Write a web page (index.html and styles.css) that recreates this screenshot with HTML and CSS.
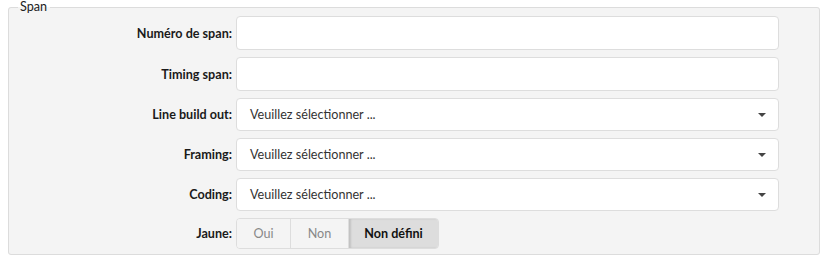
FILE: index.html
```html
<!DOCTYPE html>
<html lang="fr">
<head>
    <meta charset="UTF-8">
    <title>Span</title>
    <link rel="stylesheet" href="styles.css">
</head>
<body>
    <fieldset class="groupe">
        <legend>Span</legend>
        <div class="ligne">
            <label for="numeroSpan">Numéro de span:</label>
            <input type="text" id="numeroSpan" class="champ">
        </div>
        <div class="ligne">
            <label for="timingSpan">Timing span:</label>
            <input type="text" id="timingSpan" class="champ">
        </div>
        <div class="ligne">
            <label for="lineBuildOut">Line build out:</label>
            <div class="choix" id="lineBuildOut">Veuillez sélectionner ...<span class="fleche"></span></div>
        </div>
        <div class="ligne">
            <label for="framing">Framing:</label>
            <div class="choix" id="framing">Veuillez sélectionner ...<span class="fleche"></span></div>
        </div>
        <div class="ligne">
            <label for="coding">Coding:</label>
            <div class="choix" id="coding">Veuillez sélectionner ...<span class="fleche"></span></div>
        </div>
        <div class="ligne">
            <label>Jaune:</label>
            <div class="boutons">
                <span class="bouton oui">Oui</span>
                <span class="bouton">Non</span>
                <span class="bouton actif">Non défini</span>
            </div>
        </div>
    </fieldset>
</body>
</html>
```

FILE: styles.css
```css
body {
    font-family: Lato, "Open Sans", sans-serif;
    font-size: 12.6px;
    color: #222;
    background-color: #fff;
    margin: 0;
}

.groupe {
    background-color: #f4f4f4;
    border: 1px solid #dcdcdc;
    border-radius: 3px;
    margin: 0 5px 0 8px;
    padding: 2px 40px 5px 0;
    min-width: 0;
}

.groupe legend {
    margin-left: 9px;
    padding: 0 3px 0 2px;
    color: #222;
    line-height: 14px;
}

.ligne {
    display: grid;
    grid-template-columns: 223px 1fr;
    column-gap: 4px;
    align-items: center;
    margin-bottom: 7px;
}

.ligne:last-child {
    margin-bottom: 0;
}

.ligne label {
    text-align: right;
    font-weight: bold;
    color: #1a1a1a;
}

.champ {
    height: 34px;
    box-sizing: border-box;
    border: 1px solid #ddd;
    border-radius: 4px;
    background-color: #fff;
    margin: 0;
    font: inherit;
}

.choix {
    position: relative;
    height: 33px;
    box-sizing: border-box;
    border: 1px solid #ddd;
    border-radius: 4px;
    background-color: #fff;
    padding: 0 13px;
    line-height: 31px;
    color: #333;
}

.fleche {
    position: absolute;
    right: 12px;
    top: 14px;
    border-left: 4px solid transparent;
    border-right: 4px solid transparent;
    border-top: 4px solid #444;
}

.boutons {
    display: flex;
    width: 203px;
    height: 31px;
    box-sizing: border-box;
    border: 1px solid #ddd;
    border-radius: 4px;
    overflow: hidden;
}

.bouton {
    display: flex;
    align-items: center;
    justify-content: center;
    color: #888;
    background-color: #f4f4f4;
    border-right: 1px solid #ddd;
}

.bouton.oui {
    width: 53px;
}

.bouton:nth-child(2) {
    width: 57px;
}

.bouton.actif {
    flex: 1;
    border-right: none;
    background-color: #ddd;
    color: #111;
    font-weight: bold;
    box-shadow: inset 2px 0 2px rgba(0, 0, 0, 0.12);
}
```
